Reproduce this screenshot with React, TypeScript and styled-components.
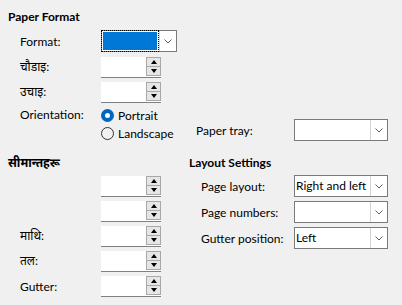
import React from 'react'
import styled, { createGlobalStyle } from 'styled-components'

const GlobalStyle = createGlobalStyle`
  html, body {
    margin: 0;
    padding: 0;
    background: #f0f0f0;
  }
  body {
    font-family: "Segoe UI", Lato, "Noto Sans Devanagari", "Noto Sans", sans-serif;
    font-size: 12px;
    color: #000;
  }
`

interface DropdownProps {
  width: number
  value?: string
  selected?: boolean
}

const Dropdown: React.FC<DropdownProps> = ({ width, value, selected }) => {
  return (
    <StyledDropBox $w={width}>
      <StyledDropValue $selected={selected}>{value}</StyledDropValue>
      <StyledDropButton>
        <svg width="8" height="5" viewBox="0 0 8 5">
          <polyline points="0.5,0.5 4,4 7.5,0.5" fill="none" stroke="#606060" strokeWidth="1" />
        </svg>
      </StyledDropButton>
    </StyledDropBox>
  )
}

const SpinBox: React.FC = () => {
  return (
    <StyledSpin>
      <StyledSpinButtons>
        <StyledSpinButton $first>
          <StyledTriangle $up />
        </StyledSpinButton>
        <StyledSpinButton>
          <StyledTriangle />
        </StyledSpinButton>
      </StyledSpinButtons>
    </StyledSpin>
  )
}

const Radio: React.FC<{ label: string; checked?: boolean }> = ({ label, checked }) => {
  return (
    <StyledRadioRow>
      <StyledRadioCircle $checked={checked} />
      <StyledRadioText>{label}</StyledRadioText>
    </StyledRadioRow>
  )
}

const App: React.FC = () => {
  return (
    <StyledPage>
      <GlobalStyle />
      <StyledTitle>Paper Format</StyledTitle>
      <StyledIndent>
        <StyledRow $h={28}>
          <StyledLabel $w={81}>Format:</StyledLabel>
          <Dropdown width={76} selected />
        </StyledRow>
        <StyledRow $h={25}>
          <StyledLabel $w={81}>चौडाइ:</StyledLabel>
          <SpinBox />
        </StyledRow>
        <StyledRow $h={25}>
          <StyledLabel $w={81}>उचाइ:</StyledLabel>
          <SpinBox />
        </StyledRow>
        <StyledOrientation>
          <StyledLabel $w={81} $lh={18}>Orientation:</StyledLabel>
          <StyledRadioGroup>
            <Radio label="Portrait" checked />
            <Radio label="Landscape" />
          </StyledRadioGroup>
          <StyledTray>
            <StyledLabel $w={98}>Paper tray:</StyledLabel>
            <Dropdown width={94} />
          </StyledTray>
        </StyledOrientation>
      </StyledIndent>

      <StyledBottom>
        <div>
          <StyledTitle $gap={1}>सीमान्तहरू</StyledTitle>
          <StyledIndent>
            <StyledRow $h={25}>
              <StyledLabel $w={81} />
              <SpinBox />
            </StyledRow>
            <StyledRow $h={25}>
              <StyledLabel $w={81} />
              <SpinBox />
            </StyledRow>
            <StyledRow $h={25}>
              <StyledLabel $w={81}>माथि:</StyledLabel>
              <SpinBox />
            </StyledRow>
            <StyledRow $h={25}>
              <StyledLabel $w={81}>तल:</StyledLabel>
              <SpinBox />
            </StyledRow>
            <StyledRow $h={25}>
              <StyledLabel $w={81}>Gutter:</StyledLabel>
              <SpinBox />
            </StyledRow>
          </StyledIndent>
        </div>
        <div>
          <StyledTitle $gap={1}>Layout Settings</StyledTitle>
          <StyledIndent>
            <StyledDropRow>
              <StyledLabel $w={93}>Page layout:</StyledLabel>
              <Dropdown width={94} value="Right and left" />
            </StyledDropRow>
            <StyledDropRow>
              <StyledLabel $w={93}>Page numbers:</StyledLabel>
              <Dropdown width={94} />
            </StyledDropRow>
            <StyledDropRow>
              <StyledLabel $w={93}>Gutter position:</StyledLabel>
              <Dropdown width={94} value="Left" />
            </StyledDropRow>
          </StyledIndent>
        </div>
      </StyledBottom>
    </StyledPage>
  )
}

const StyledPage = styled.div`
  width: 402px;
  height: 305px;
  box-sizing: border-box;
  padding: 7px 0 0 8px;
  overflow: hidden;
`

const StyledTitle = styled.div<{ $gap?: number }>`
  font-weight: 700;
  height: 20px;
  line-height: 20px;
  margin-bottom: ${(p) => p.$gap || 0}px;
  white-space: nowrap;
`

const StyledIndent = styled.div`
  padding-left: 12px;
`

const StyledRow = styled.div<{ $h: number }>`
  display: flex;
  align-items: center;
  height: ${(p) => p.$h}px;
`

const StyledDropRow = styled.div`
  display: flex;
  align-items: center;
  height: 26px;
  padding-bottom: 2px;
  box-sizing: border-box;
`

const StyledLabel = styled.div<{ $w: number; $lh?: number }>`
  width: ${(p) => p.$w}px;
  flex-shrink: 0;
  white-space: nowrap;
  line-height: ${(p) => (p.$lh ? `${p.$lh}px` : 'normal')};
`

const StyledOrientation = styled.div`
  display: flex;
  margin-top: 1px;
`

const StyledRadioGroup = styled.div`
  display: flex;
  flex-direction: column;
  width: 95px;
`

const StyledTray = styled.div`
  display: flex;
  align-items: center;
  align-self: flex-end;
  margin-bottom: 1px;
`

const StyledRadioRow = styled.div`
  display: flex;
  align-items: center;
  height: 18px;
  white-space: nowrap;
`

const StyledRadioCircle = styled.span<{ $checked?: boolean }>`
  position: relative;
  width: 13px;
  height: 13px;
  box-sizing: border-box;
  border-radius: 50%;
  flex-shrink: 0;
  border: ${(p) => (p.$checked ? 'none' : '1px solid #333')};
  background: ${(p) => (p.$checked ? '#0067c0' : 'transparent')};
  &::after {
    content: '';
    display: ${(p) => (p.$checked ? 'block' : 'none')};
    position: absolute;
    left: 4px;
    top: 4px;
    width: 5px;
    height: 5px;
    border-radius: 50%;
    background: #fff;
  }
`

const StyledRadioText = styled.span`
  margin-left: 4px;
`

const StyledBottom = styled.div`
  display: grid;
  grid-template-columns: 181px 1fr;
  margin-top: 11px;
`

const StyledDropBox = styled.div<{ $w: number }>`
  display: flex;
  width: ${(p) => p.$w}px;
  height: 22px;
  box-sizing: border-box;
  border: 1px solid #7a7a7a;
  background: #fff;
`

const StyledDropValue = styled.div<{ $selected?: boolean }>`
  flex: 1;
  min-width: 0;
  padding-left: 1px;
  line-height: 20px;
  white-space: nowrap;
  overflow: hidden;
  ${(p) =>
    p.$selected &&
    `
    margin: -1px 0 -1px -1px;
    border: 1px dotted #000;
    background: #0078d7;
    background-clip: content-box;
    padding: 1px;
  `}
`

const StyledDropButton = styled.div`
  width: 16px;
  flex-shrink: 0;
  display: flex;
  align-items: center;
  justify-content: center;
  border-left: 1px solid #d4d4d4;
`

const StyledSpin = styled.div`
  display: flex;
  justify-content: flex-end;
  width: 60px;
  height: 21px;
  box-sizing: border-box;
  background: #fff;
  border-bottom: 1px solid #808080;
`

const StyledSpinButtons = styled.div`
  display: flex;
  flex-direction: column;
  width: 15px;
  height: 19px;
`

const StyledSpinButton = styled.div<{ $first?: boolean }>`
  flex: 1;
  display: flex;
  align-items: center;
  justify-content: center;
  box-sizing: border-box;
  background: #e6e6e6;
  border: 1px solid #a8a8a8;
  border-top: ${(p) => (p.$first ? '1px solid #a8a8a8' : 'none')};
`

const StyledTriangle = styled.span<{ $up?: boolean }>`
  width: 0;
  height: 0;
  border-left: 3px solid transparent;
  border-right: 3px solid transparent;
  ${(p) => (p.$up ? 'border-bottom: 4px solid #000;' : 'border-top: 4px solid #000;')}
`

export default App
